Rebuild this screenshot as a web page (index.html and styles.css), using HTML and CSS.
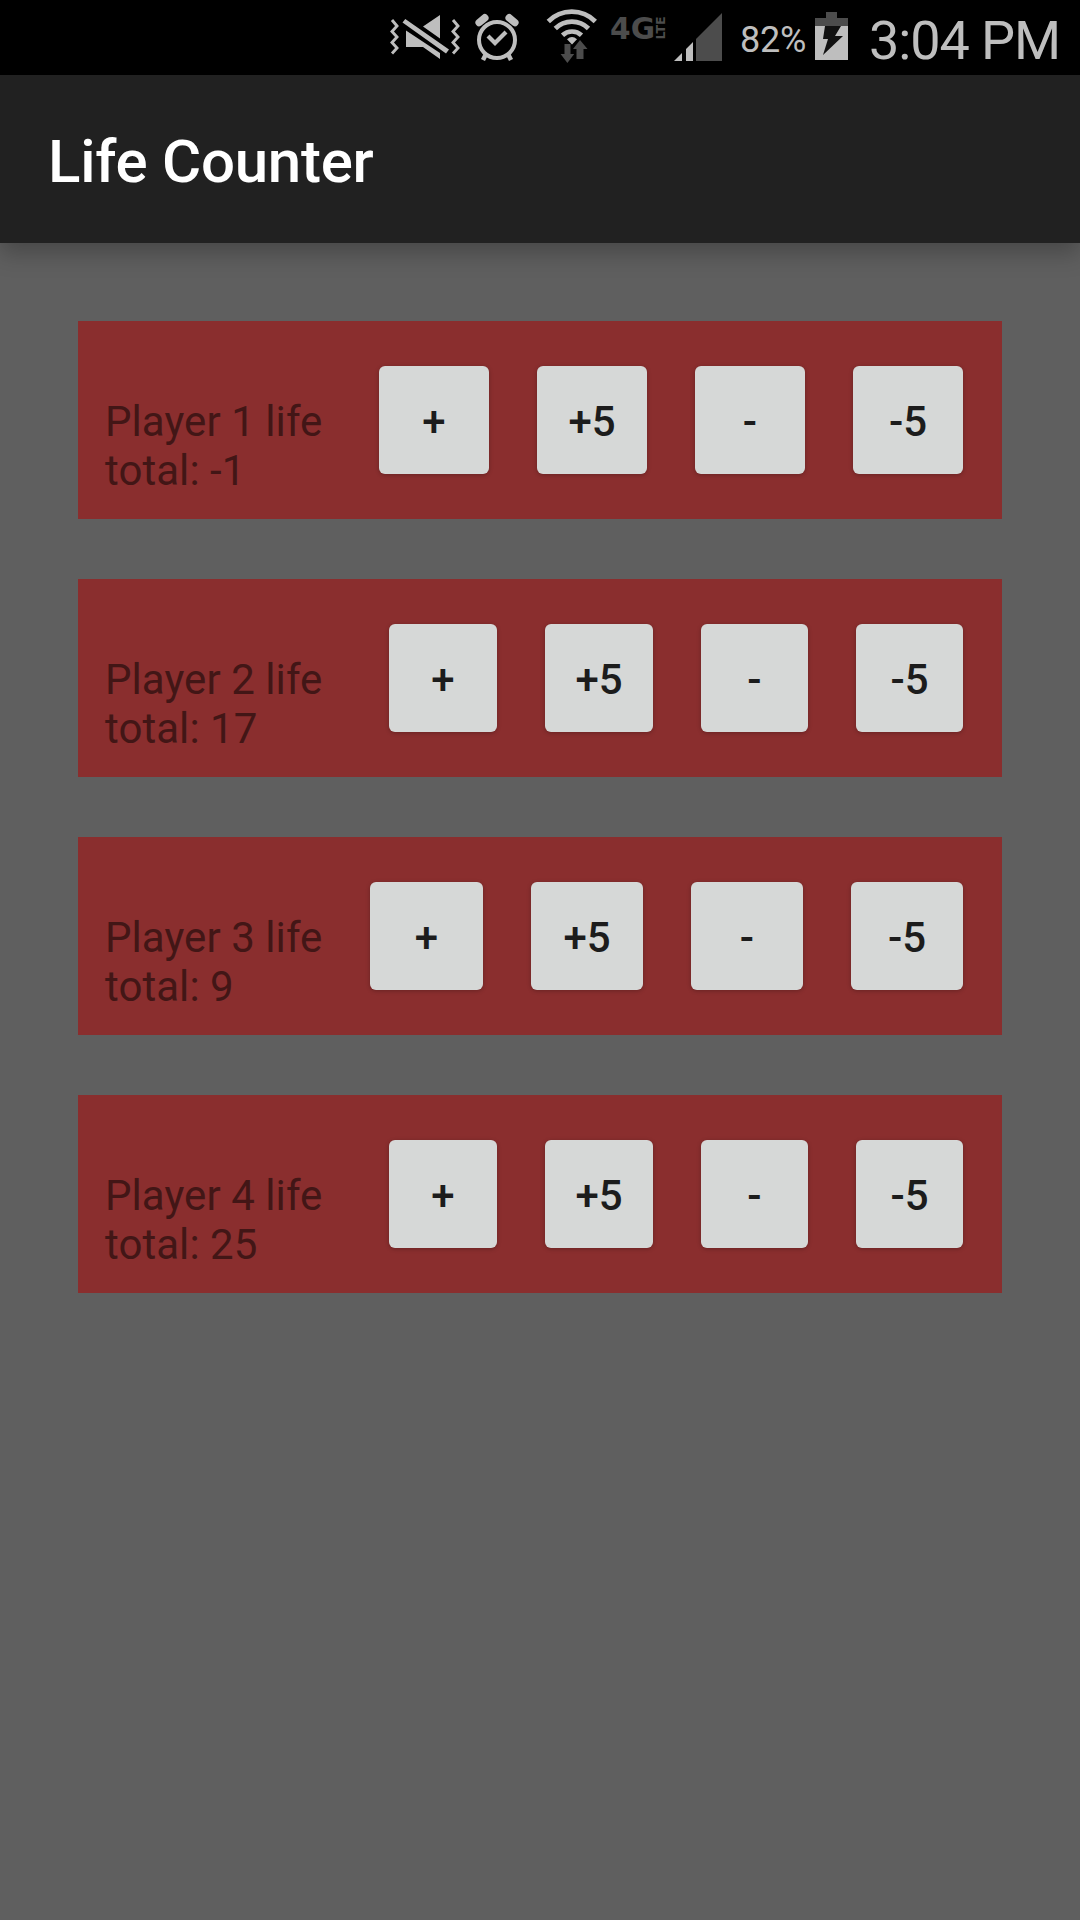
FILE: index.html
```html
<!DOCTYPE html>
<html lang="en">
<head>
<meta charset="utf-8">
<title>Life Counter</title>
<link rel="stylesheet" href="styles.css">
</head>
<body>
<div class="status-bar">
  <svg class="icon mute" viewBox="390 0 70 75" width="70" height="75" aria-label="Vibrate, muted">
    <path class="line" d="M392 20l5 6-5 5.5 5 5.500-5 5.500 5 5.500-5 5.500M453 20l5 6-5 5.500 5 5.500-5 5.500 5 5.500-5 5.500"/>
    <path class="light" d="M440 15v23.500L423 26.500zM406 30.500l34 22.500v6L423 47h-17zM405.300 19L449 49.500l-3 4L402.500 22.500z"/>
  </svg>
  <svg class="icon alarm" viewBox="474 0 48 75" width="48" height="75" aria-label="Alarm">
    <circle class="ring" cx="497" cy="40" r="18"/>
    <path class="check" d="M488 36l7 7 11-11"/>
    <path class="bell" d="M479.200 22.500l5.600-4.700M514.800 22.500l-5.600-4.700"/>
    <path class="foot" d="M486 54l-3 6M508 54l3 6"/>
  </svg>
  <svg class="icon wifi" viewBox="546 0 52 75" width="52" height="75" aria-label="Wi-Fi">
    <path class="wave" d="M548.300 21.500a33 33 0 0 1 47 0M555.300 28.500a23.500 23.500 0 0 1 33.200 0M562.500 35.200a14 14 0 0 1 19 0"/>
    <path class="light" d="M567 39.300q5-4.500 10 0L572 44.500z"/>
    <path class="dark" d="M564.500 44h6v10h3.700l-6.800 9-6.800-9h3.900zM576.500 59h7V49h4l-7.500-9-7 9h3.500z"/>
  </svg>
  <svg class="icon network" viewBox="610 0 58 75" width="58" height="75" aria-label="4G LTE">
    <text class="net-main" x="610" y="39" textLength="45" lengthAdjust="spacingAndGlyphs">4G</text>
    <text class="net-sub" transform="translate(665 39.500) rotate(-90)" textLength="23" lengthAdjust="spacingAndGlyphs">LTE</text>
  </svg>
  <svg class="icon signal" viewBox="673 0 50 75" width="50" height="75" aria-label="Signal">
    <path class="light" d="M674 61l8-8v8zM686 49l7-7v19h-7z"/>
    <path class="dark" d="M696 39l26-26v48h-26z"/>
  </svg>
  <span class="percent">82%</span>
  <svg class="icon battery" viewBox="815 0 33 75" width="33" height="75" aria-label="Charging">
    <path class="dark" d="M815 18h11v-6h11v6h11v8h-33z"/>
    <path class="light" d="M815 26h33v34h-33z"/>
    <path class="bolt" d="M825 26h16l-6 10h8l-20 19 5-16h-5z"/>
  </svg>
  <span class="clock">3:04 PM</span>
</div>
<header class="app-bar"><h1 class="title">Life Counter</h1></header>
<main class="players">
  <section class="card cols-a">
    <p class="life">Player 1 life<br>total: -1</p>
    <button class="btn">+</button><button class="btn">+5</button><button class="btn">-</button><button class="btn">-5</button>
  </section>
  <section class="card cols-b">
    <p class="life">Player 2 life<br>total: 17</p>
    <button class="btn">+</button><button class="btn">+5</button><button class="btn">-</button><button class="btn">-5</button>
  </section>
  <section class="card cols-c">
    <p class="life">Player 3 life<br>total: 9</p>
    <button class="btn">+</button><button class="btn">+5</button><button class="btn">-</button><button class="btn">-5</button>
  </section>
  <section class="card cols-b">
    <p class="life">Player 4 life<br>total: 25</p>
    <button class="btn">+</button><button class="btn">+5</button><button class="btn">-</button><button class="btn">-5</button>
  </section>
</main>
</body>
</html>
```
FILE: styles.css
```css
* { box-sizing: border-box; }
body {
  margin: 0;
  min-height: 1920px;
  background: #5f5f5f;
  font-family: Roboto, "Liberation Sans", sans-serif;
}
.status-bar {
  display: flex;
  height: 75px;
  padding-left: 390px;
  background: #000;
  color: #bebebe;
}
.icon { flex: none; display: block; }
.alarm { margin-left: 14px; }
.wifi { margin-left: 24px; }
.network { margin-left: 12px; }
.signal { margin-left: 5px; }
.light { fill: #bebebe; }
.dark { fill: #4c4c4c; }
.bolt { fill: #111; }
.line { fill: none; stroke: #bebebe; stroke-width: 2.9; }
.ring { fill: none; stroke: #bebebe; stroke-width: 4; }
.check { fill: none; stroke: #bebebe; stroke-width: 4.2; }
.bell { fill: none; stroke: #bebebe; stroke-width: 7.5; stroke-linecap: round; }
.foot { fill: none; stroke: #bebebe; stroke-width: 4.5; }
.wave { fill: none; stroke: #bebebe; stroke-width: 4.7; }
.net-main { fill: #4c4c4c; font: 700 31px "DejaVu Sans", sans-serif; }
.net-sub { fill: #4c4c4c; font: 700 12px "DejaVu Sans", sans-serif; }
.percent {
  width: 75px;
  margin-left: 17px;
  font-size: 36px;
  line-height: 81px;
  letter-spacing: -.2px;
  white-space: nowrap;
}
.clock {
  margin-left: 21px;
  font-size: 54px;
  line-height: 82px;
  letter-spacing: -1.1px;
  white-space: nowrap;
}
.app-bar {
  display: flex;
  align-items: center;
  height: 168px;
  padding-left: 48px;
  background: #212121;
  box-shadow: 0 10px 22px rgba(0, 0, 0, .25);
}
.title {
  margin: 0;
  padding-top: 5px;
  color: #fff;
  font-size: 60px;
  font-weight: 500;
  line-height: 70px;
  letter-spacing: -.25px;
}
.players {
  display: flex;
  flex-direction: column;
  gap: 60px;
  padding: 78px;
}
.card {
  display: grid;
  column-gap: 48px;
  height: 198px;
  padding: 45px 39px 45px 27px;
  background: #8a2e2e;
}
.cols-a { grid-template-columns: 226px 110px 110px 110px 110px; }
.cols-b { grid-template-columns: 236px 108px 108px 107px 107px; }
.cols-c { grid-template-columns: 217px 113px 112px 112px 112px; }
.life {
  margin: 0;
  padding-top: 31px;
  color: #421616;
  font-size: 42px;
  line-height: 49px;
  letter-spacing: .06px;
  white-space: nowrap;
}
.btn {
  height: 108px;
  padding: 4px 0 0;
  border: 0;
  border-radius: 6px;
  background: #d6d8d7;
  box-shadow: 0 1px 4px rgba(0, 0, 0, .25);
  color: #1c1c1c;
  font: 500 42px/104px Roboto, "Liberation Sans", sans-serif;
}
```
